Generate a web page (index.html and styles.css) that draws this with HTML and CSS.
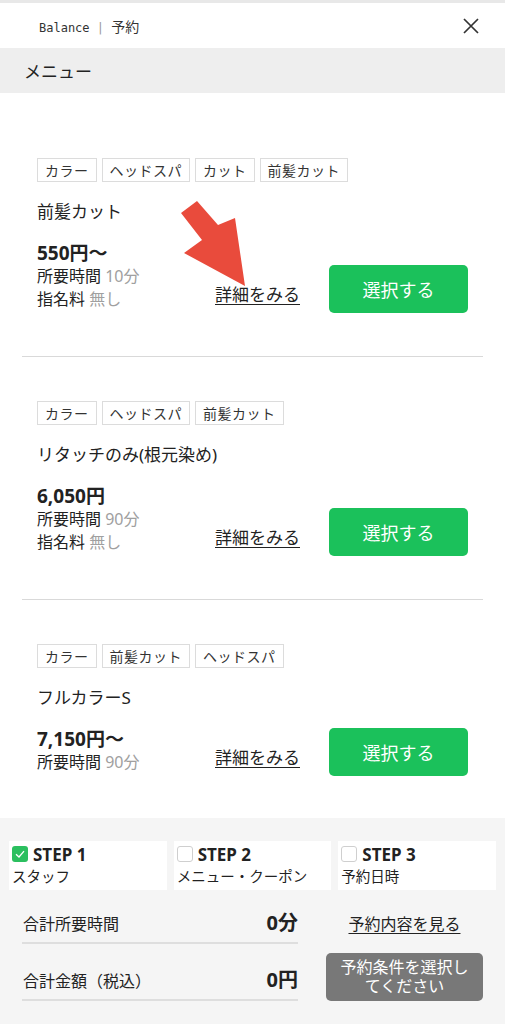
FILE: index.html
```html
<!DOCTYPE html>
<html lang="ja">
<head>
<meta charset="utf-8">
<title>Balance | 予約</title>
<link rel="stylesheet" href="styles.css">
</head>
<body>
<div class="topstrip"></div>
<header class="header">
  <div class="brand">Balance <span class="sep">|</span> <span class="brand-jp">予約</span></div>
  <button class="close" aria-label="閉じる">
    <svg width="16" height="16" viewBox="0 0 16 16"><path d="M1 1 L15 15 M15 1 L1 15" stroke="#333" stroke-width="1.7" fill="none"/></svg>
  </button>
</header>
<div class="section-title">メニュー</div>

<main class="menu-list">
  <article class="card card-first">
    <ul class="tags">
      <li class="tag">カラー</li>
      <li class="tag">ヘッドスパ</li>
      <li class="tag">カット</li>
      <li class="tag">前髪カット</li>
    </ul>
    <h2 class="title">前髪カット</h2>
    <div class="row">
      <div class="info">
        <div class="price">550円〜</div>
        <div class="meta">所要時間 <span class="val">10分</span></div>
        <div class="meta">指名料 <span class="val">無し</span></div>
      </div>
      <a class="detail">詳細をみる</a>
      <button class="select">選択する</button>
    </div>
    <svg class="pointer" width="68" height="90" viewBox="0 0 68 90"><polygon points="1,15 17,3 38,27 55,20 65,88 4,55 22,42" fill="#e94b3c"/></svg>
  </article>

  <article class="card">
    <ul class="tags">
      <li class="tag">カラー</li>
      <li class="tag">ヘッドスパ</li>
      <li class="tag">前髪カット</li>
    </ul>
    <h2 class="title">リタッチのみ(根元染め)</h2>
    <div class="row">
      <div class="info">
        <div class="price">6,050円</div>
        <div class="meta">所要時間 <span class="val">90分</span></div>
        <div class="meta">指名料 <span class="val">無し</span></div>
      </div>
      <a class="detail">詳細をみる</a>
      <button class="select">選択する</button>
    </div>
  </article>

  <article class="card card-last">
    <ul class="tags">
      <li class="tag">カラー</li>
      <li class="tag">前髪カット</li>
      <li class="tag">ヘッドスパ</li>
    </ul>
    <h2 class="title">フルカラーS</h2>
    <div class="row">
      <div class="info">
        <div class="price">7,150円〜</div>
        <div class="meta">所要時間 <span class="val">90分</span></div>
      </div>
      <a class="detail">詳細をみる</a>
      <button class="select">選択する</button>
    </div>
  </article>
</main>

<footer class="footer">
  <div class="steps">
    <div class="step">
      <div class="step-head">
        <span class="check check-on"><svg width="16" height="16" viewBox="0 0 16 16"><path d="M4 8.2 L7 11 L12 5.2" stroke="#fff" stroke-width="1.3" fill="none"/></svg></span>
        <span class="step-no">STEP 1</span>
      </div>
      <div class="step-name">スタッフ</div>
    </div>
    <div class="step">
      <div class="step-head">
        <span class="check"></span>
        <span class="step-no">STEP 2</span>
      </div>
      <div class="step-name">メニュー・クーポン</div>
    </div>
    <div class="step">
      <div class="step-head">
        <span class="check"></span>
        <span class="step-no">STEP 3</span>
      </div>
      <div class="step-name">予約日時</div>
    </div>
  </div>
  <div class="summary">
    <div class="totals">
      <div class="total-row">
        <span class="total-label">合計所要時間</span>
        <span class="total-value">0分</span>
      </div>
      <div class="total-row total-row-2">
        <span class="total-label">合計金額（税込）</span>
        <span class="total-value">0円</span>
      </div>
    </div>
    <div class="actions">
      <a class="view-link">予約内容を見る</a>
      <button class="disabled-btn">予約条件を選択してください</button>
    </div>
  </div>
</footer>
</body>
</html>
```

FILE: styles.css
```css
* {
  box-sizing: border-box;
  margin: 0;
  padding: 0;
}

body {
  width: 505px;
  font-family: "Noto Sans", "Noto Sans CJK JP", sans-serif;
  color: #222;
  background: #fff;
}

.topstrip {
  height: 3px;
  background: #e8e8e8;
}

.header {
  height: 45px;
  display: flex;
  align-items: center;
  justify-content: space-between;
  padding: 0 26px 0 39px;
}

.brand {
  font-family: "DejaVu Sans Mono", "Noto Sans CJK JP", monospace;
  font-size: 12px;
  color: #333;
}

.sep {
  color: #999;
}

.brand-jp {
  font-size: 14px;
}

.close {
  display: flex;
  border: none;
  background: none;
}

.section-title {
  height: 45px;
  display: flex;
  align-items: center;
  padding-left: 24px;
  background: #eeeeee;
  font-size: 17px;
}

.menu-list {
  padding: 20px 22px 0;
}

.card {
  position: relative;
  padding: 44px 15px 43px;
  border-bottom: 1px solid #d9d9d9;
}

.card-first {
  padding-top: 45px;
}

.card-last {
  border-bottom: none;
  padding-bottom: 42px;
}

.tags {
  list-style: none;
  display: flex;
  gap: 5px;
}

.tag {
  height: 24px;
  display: flex;
  align-items: center;
  padding: 0 7px;
  border: 1px solid #dcdcdc;
  font-size: 14px;
  letter-spacing: 0.5px;
  color: #333;
}

.title {
  margin-top: 18px;
  font-size: 17px;
  font-weight: normal;
  line-height: 24px;
}

.row {
  margin-top: 17px;
  display: flex;
  align-items: flex-end;
}

.info {
  flex: 1;
  padding-bottom: 2px;
}

.price {
  font-size: 19px;
  font-weight: bold;
  line-height: 24px;
}

.meta {
  font-size: 16px;
  line-height: 23px;
}

.val {
  color: #a0a0a0;
}

.detail {
  font-size: 17px;
  line-height: 24px;
  margin: 0 29px 6px 0;
  text-decoration: underline;
  text-underline-offset: 3px;
  color: #222;
}

.select {
  width: 139px;
  height: 48px;
  border: none;
  border-radius: 5px;
  background: #1bc15b;
  color: #fff;
  font-family: "Noto Sans", "Noto Sans CJK JP", sans-serif;
  font-size: 18px;
}

.pointer {
  position: absolute;
  left: 158px;
  top: 85px;
}

.footer {
  background: #f5f5f5;
  padding: 23px 0 25px;
}

.steps {
  display: flex;
  gap: 7px;
  padding: 0 9px;
}

.step {
  flex: 1;
  background: #fff;
  padding: 3px 3px 4px;
}

.step-head {
  display: flex;
  align-items: center;
  gap: 5px;
  height: 20px;
}

.check {
  width: 16px;
  height: 16px;
  border-radius: 3px;
  border: 1px solid #cfcfcf;
  background: #fff;
  display: flex;
}

.check-on {
  border: none;
  background: #2bbf5f;
}

.step-no {
  font-size: 17px;
  font-weight: bold;
}

.step-name {
  margin-top: 2px;
  font-size: 14.5px;
  line-height: 20px;
}

.summary {
  display: flex;
  gap: 28px;
  padding: 0 22px;
}

.totals {
  flex: 1;
}

.total-row {
  display: flex;
  justify-content: space-between;
  align-items: baseline;
  padding: 22px 0 7px 1px;
  border-bottom: 2px solid #dedede;
  line-height: 22px;
}

.total-row-2 {
  padding-top: 25px;
}

.total-label {
  font-size: 16px;
}

.total-value {
  font-size: 20px;
  font-weight: bold;
}

.actions {
  width: 157px;
  display: flex;
  flex-direction: column;
  align-items: center;
  padding-top: 23px;
}

.view-link {
  font-size: 16px;
  line-height: 22px;
  text-decoration: underline;
  text-underline-offset: 3px;
  color: #222;
}

.disabled-btn {
  margin-top: 18px;
  width: 157px;
  height: 48px;
  border: none;
  border-radius: 5px;
  background: #787878;
  color: #fff;
  font-family: "Noto Sans", "Noto Sans CJK JP", sans-serif;
  font-size: 16px;
  line-height: 19px;
  padding: 0 10px;
}
```
